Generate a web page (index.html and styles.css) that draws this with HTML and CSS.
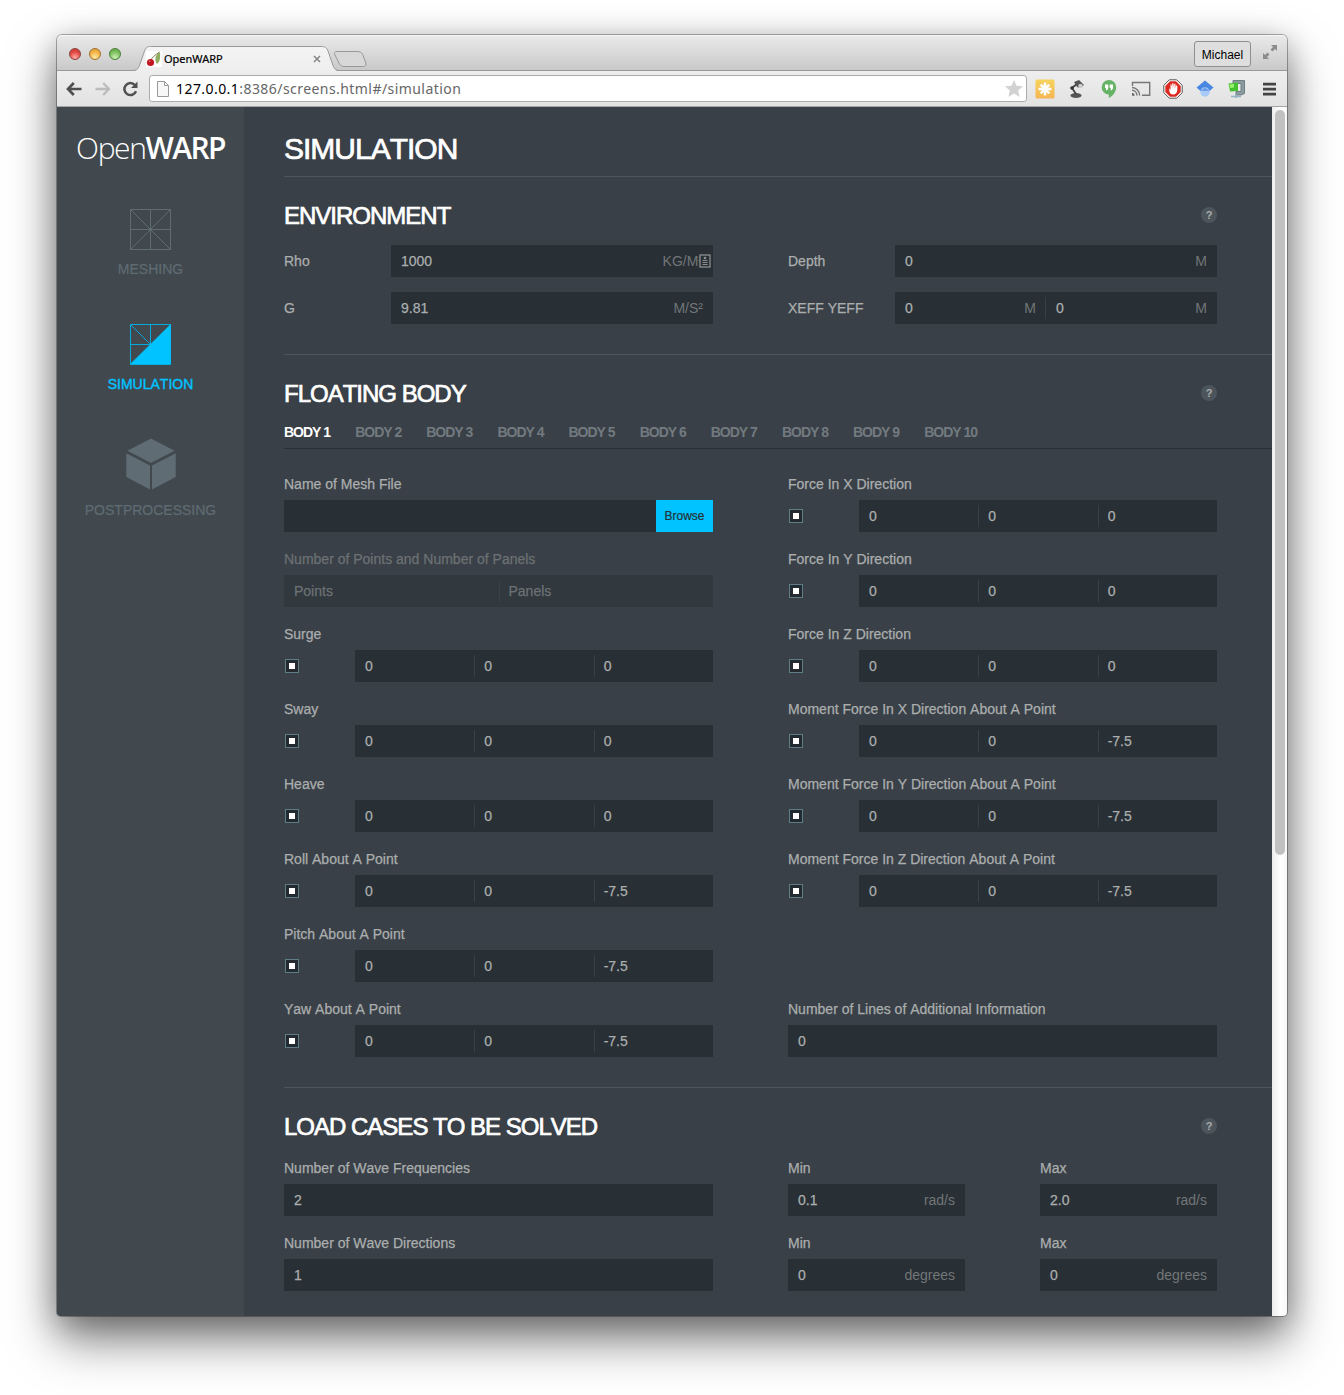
FILE: index.html
```html
<!DOCTYPE html>
<html lang="en">
<head>
<meta charset="utf-8">
<title>OpenWARP</title>
<link rel="stylesheet" href="styles.css">
</head>
<body>
<div class="window">
  <div class="tabstrip">
    <div class="lights"><i class="light red"></i><i class="light amber"></i><i class="light green"></i></div>
    <div class="browser-tab">
      <svg class="tab-shape" width="260" height="26" viewBox="0 0 260 26">
        <defs><linearGradient id="tabfill" x1="0" y1="0" x2="0" y2="1"><stop offset="0" stop-color="#f4f4f4"/><stop offset="1" stop-color="#eeeeee"/></linearGradient></defs>
        <path d="M0 25C3 25 5 23 6.500 19.500L11.500 5C13 1.500 14 .5 17.500 .5H188C192 .5 193.500 1.500 195 5L200 19.500C201.500 23 202.500 25 206 25V26H0Z" fill="url(#tabfill)"/>
        <path d="M-1 24.500C4 24.500 5 23 6.500 19.500L11.500 5C13 1.500 14 .5 17.500 .5H188C192 .5 193.500 1.500 195 5L200 19.500C201.500 23 202.500 24.500 207 24.500" fill="none" stroke="#999"/>
        <path d="M201.500 6.500Q202 5.500 204 5.500H225Q228 5.500 229.500 8L232.500 16Q234 20.500 230.500 20.500H211Q208 20.500 206.500 18L202 9Q201 7.500 201.500 6.500Z" fill="#d8d8d8" stroke="#999"/>
      </svg>
      <svg class="favicon" width="16" height="16" viewBox="0 0 16 16"><rect width="16" height="16" fill="#fff"/><path d="M13.500 1Q6 6 5 9" fill="none" stroke="#8a7a55"/><path d="M14 1C9 4 8 9 11 13C14 11 14.500 6 14 1Z" fill="#8fae62"/><circle cx="4.500" cy="11.500" r="3.600" fill="#c01822"/><circle cx="3.500" cy="10.300" r=".8" fill="#ee7d80"/></svg>
      <span class="tab-title">OpenWARP</span>
      <svg class="tab-close" width="8" height="8" viewBox="0 0 8 8"><path d="M1 1L7 7M7 1L1 7" stroke="#858585" stroke-width="1.500"/></svg>
    </div>
    <div class="strip-end">
      <span class="profile">Michael</span>
      <svg width="16" height="16" viewBox="0 0 16 16" fill="#8c8c8c"><path d="M9 1H15V7L13 5L10.500 7.500L8.500 5.500L11 3ZM1 9V15H7L5 13L7.500 10.500L5.500 8.500L3 11Z"/></svg>
    </div>
  </div>
  <div class="toolbar">
    <svg class="arrow" width="16" height="14" viewBox="0 0 16 14"><path d="M15.500 7H2.500M7.800 1L2 7L7.800 13" fill="none" stroke="#505050" stroke-width="2.700"/></svg>
    <svg class="arrow" width="16" height="14" viewBox="0 0 16 14"><path d="M.5 7H13.500M8.200 1L14 7L8.200 13" fill="none" stroke="#bcbcbc" stroke-width="2.300"/></svg>
    <svg class="reload" width="17" height="16" viewBox="0 0 17 16"><path d="M13 4.200A6 6 0 1 0 14 10.300" fill="none" stroke="#505050" stroke-width="2.500"/><path d="M15.500 .5V7H9Z" fill="#505050"/></svg>
    <div class="omnibox">
      <svg width="12" height="16" viewBox="0 0 12 16"><path d="M.5 .5H7.500L11.500 4.500V15.500H.5ZM7.500 .5V4.500H11.500" fill="#f7f7f7" stroke="#999"/></svg>
      <span class="url"><b>127.0.0.1</b>:8386/screens.html#/simulation</span>
      <svg class="star" width="18" height="17" viewBox="0 0 18 17"><path d="M9 0L11.500 5.700L18 6.300L13.200 10.600L14.600 17L9 13.600L3.400 17L4.800 10.600L0 6.300L6.500 5.700Z" fill="#d2d2d2"/></svg>
    </div>
    <div class="extensions">
      <svg width="20" height="20" viewBox="0 0 20 20"><defs><linearGradient id="sun" x1="0" y1="0" x2="0" y2="1"><stop offset="0" stop-color="#f6d35c"/><stop offset="1" stop-color="#f5b553"/></linearGradient></defs><rect x=".5" y=".5" width="19" height="19" rx="1.500" fill="url(#sun)"/><path d="M10 3.500V16.500M3.500 10H16.500M5.700 5.700L14.300 14.300M14.300 5.700L5.700 14.300" stroke="#fff" stroke-width="2.500"/></svg>
      <svg width="20" height="20" viewBox="0 0 20 20"><ellipse cx="9" cy="16.500" rx="5.500" ry="2.500" fill="#555"/><path d="M9 15L5 9L11 4" fill="none" stroke="#444" stroke-width="1.800"/><path d="M7 3L12 1L17 6L13 9L10 8Z" fill="#555"/><circle cx="13.500" cy="7" r="2.300" fill="#ccc"/><circle cx="5" cy="9" r="1.800" fill="#333"/></svg>
      <svg width="20" height="20" viewBox="0 0 20 20"><path d="M10 1A7.200 7.200 0 0 0 9.800 15.500V19C14 17 17.200 12.500 17.200 8.200A7.200 7.200 0 0 0 10 1Z" fill="#66b266"/><path d="M6 5.500H9.300V9Q9 11 7 11.500V9H6ZM10.700 5.500H14V9Q13.700 11 11.700 11.500V9H10.700Z" fill="#fff"/></svg>
      <svg width="20" height="20" viewBox="0 0 20 20" fill="none" stroke="#777" stroke-width="1.400"><path d="M1.500 7V3.500H18.700V16.300H11"/><path d="M1 8.500A8 8 0 0 1 8.700 16.500M1 11.300A5.300 5.300 0 0 1 6 16.500"/><path d="M1 14V16.700H3.600A2.600 2.600 0 0 0 1 14Z" fill="#666" stroke="none"/></svg>
      <svg width="20" height="20" viewBox="0 0 20 20"><path d="M6.300 .8H13.700L19.200 6.300V13.700L13.700 19.200H6.300L.8 13.700V6.300Z" fill="#fff" stroke="#555" stroke-width="1"/><path d="M7 2.300H13L17.700 7V13L13 17.700H7L2.300 13V7Z" fill="#dc2a22"/><path d="M6.300 9V12Q7 15.500 10.300 15.500Q13.500 15.500 14.300 11.500V6.500H13V9.500L12.300 4.800H11.200V9L10.300 4.200H9.200V9L8.500 5.500H7.500V11Z" fill="#fff"/></svg>
      <svg width="20" height="20" viewBox="0 0 20 20"><path d="M10 1.500L18.500 8.500L14 12.500H6L1.500 8.500Z" fill="#4a87e0"/><circle cx="10" cy="13" r="4.700" fill="#a9c9f7"/><path d="M5.500 12L10 8.500L14.500 12" fill="#6a9ee9"/></svg>
      <svg width="20" height="20" viewBox="0 0 20 20"><path d="M6 1.500H17.500V14.500L14 16H9V12.500H14V4.500H6Z" fill="#8b9ca1" stroke="#6d7d82"/><path d="M1.500 4.500L11 3.500V12L3 12.500Z" fill="#43c12e"/><path d="M2.500 5.500L7 5V8.500L3 9Z" fill="#9cf06f"/><path d="M4 17.500H14M9 15.500V19" stroke="#93b4c4" stroke-width="1.700"/></svg>
      <svg class="menu-icon" width="20" height="20" viewBox="0 0 20 20"><path d="M4 5.200H17M4 10.200H17M4 15.200H17" stroke="#444" stroke-width="2.700"/></svg>
    </div>
  </div>
  <div class="viewport">
    <aside class="sidebar">
      <div class="logo"><span class="logo-light">Open</span><span class="logo-bold">WARP</span></div>
      <nav>
        <a class="nav-item"><svg width="42" height="42" viewBox="0 0 42 42" fill="none" stroke="#5f6c73"><path d="M.5 1.500H40.500V41.500H.5ZM20.500 1.500V41.500M.5 21.500H40.500M.5 1.500L40.500 41.500M40.500 1.500L.5 41.500"/></svg><span>MESHING</span></a>
        <a class="nav-item active"><svg width="42" height="42" viewBox="0 0 42 42" fill="none" stroke="#02a9dc"><path d="M.5 1.500H40.500V41.500H.5ZM20.500 1.500V21.500M.5 21.500H20.500M.5 1.500L20.500 21.500"/><path d="M40.500 1.500V41H.5Z" fill="#00c3ff" stroke="#00c3ff" stroke-width=".6"/></svg><span>SIMULATION</span></a>
        <a class="nav-item cube"><svg width="50" height="52" viewBox="0 0 50 52" fill="#5f6c73"><path d="M25 .5L48.500 12.800L25 25L1.500 12.800ZM.3 15.300L24 27.500V51.500L.3 39ZM49.700 15.300L26 27.500V51.500L49.700 39Z"/></svg><span>POSTPROCESSING</span></a>
      </nav>
    </aside>
    <main class="main">
      <h1>SIMULATION</h1>
      <section>
        <header><h2>ENVIRONMENT</h2><span class="help">?</span></header>
        <div class="columns env">
          <div class="inline"><label>Rho</label><div class="box"><div class="cell wide">1000<em>KG/M³</em></div>
            <svg class="contact" width="12" height="14" viewBox="0 0 12 14"><rect x="1" y="1" width="10" height="12" fill="#282f35" stroke="#8b8e8e" stroke-width="1.300"/><circle cx="6" cy="4" r="1.300" fill="#8b8e8e"/><path d="M3.500 6.500H8.500M3.500 8.500H8.500M3.500 10.500H8.500" stroke="#8b8e8e" fill="none"/></svg></div></div>
          <div class="inline"><label>Depth</label><div class="box"><div class="cell">0<em>M</em></div></div></div>
          <div class="inline"><label>G</label><div class="box"><div class="cell">9.81<em>M/S²</em></div></div></div>
          <div class="inline"><label>XEFF YEFF</label><div class="box pair"><div class="cell">0<em>M</em></div><div class="cell">0<em>M</em></div></div></div>
        </div>
      </section>
      <section>
        <header><h2>FLOATING BODY</h2><span class="help">?</span></header>
        <div class="tabs"><a class="current">BODY 1</a><a>BODY 2</a><a>BODY 3</a><a>BODY 4</a><a>BODY 5</a><a>BODY 6</a><a>BODY 7</a><a>BODY 8</a><a>BODY 9</a><a>BODY 10</a></div>
        <div class="columns">
          <div class="field"><label>Name of Mesh File</label><div class="box"><div class="cell"></div><button>Browse</button></div></div>
          <div class="field"><label>Force In X Direction</label><div class="checked"><i class="check"></i><div class="box"><div class="cell">0</div><div class="cell">0</div><div class="cell">0</div></div></div></div>
          <div class="field disabled"><label>Number of Points and Number of Panels</label><div class="box"><div class="cell">Points</div><div class="cell">Panels</div></div></div>
          <div class="field"><label>Force In Y Direction</label><div class="checked"><i class="check"></i><div class="box"><div class="cell">0</div><div class="cell">0</div><div class="cell">0</div></div></div></div>
          <div class="field"><label>Surge</label><div class="checked"><i class="check"></i><div class="box"><div class="cell">0</div><div class="cell">0</div><div class="cell">0</div></div></div></div>
          <div class="field"><label>Force In Z Direction</label><div class="checked"><i class="check"></i><div class="box"><div class="cell">0</div><div class="cell">0</div><div class="cell">0</div></div></div></div>
          <div class="field"><label>Sway</label><div class="checked"><i class="check"></i><div class="box"><div class="cell">0</div><div class="cell">0</div><div class="cell">0</div></div></div></div>
          <div class="field"><label>Moment Force In X Direction About A Point</label><div class="checked"><i class="check"></i><div class="box"><div class="cell">0</div><div class="cell">0</div><div class="cell">-7.5</div></div></div></div>
          <div class="field"><label>Heave</label><div class="checked"><i class="check"></i><div class="box"><div class="cell">0</div><div class="cell">0</div><div class="cell">0</div></div></div></div>
          <div class="field"><label>Moment Force In Y Direction About A Point</label><div class="checked"><i class="check"></i><div class="box"><div class="cell">0</div><div class="cell">0</div><div class="cell">-7.5</div></div></div></div>
          <div class="field"><label>Roll About A Point</label><div class="checked"><i class="check"></i><div class="box"><div class="cell">0</div><div class="cell">0</div><div class="cell">-7.5</div></div></div></div>
          <div class="field"><label>Moment Force In Z Direction About A Point</label><div class="checked"><i class="check"></i><div class="box"><div class="cell">0</div><div class="cell">0</div><div class="cell">-7.5</div></div></div></div>
          <div class="field first-col"><label>Pitch About A Point</label><div class="checked"><i class="check"></i><div class="box"><div class="cell">0</div><div class="cell">0</div><div class="cell">-7.5</div></div></div></div>
          <div class="field first-col"><label>Yaw About A Point</label><div class="checked"><i class="check"></i><div class="box"><div class="cell">0</div><div class="cell">0</div><div class="cell">-7.5</div></div></div></div>
          <div class="field"><label>Number of Lines of Additional Information</label><div class="box"><div class="cell">0</div></div></div>
        </div>
      </section>
      <section class="load">
        <header><h2>LOAD CASES TO BE SOLVED</h2><span class="help">?</span></header>
        <div class="columns">
          <div class="field"><label>Number of Wave Frequencies</label><div class="box"><div class="cell">2</div></div></div>
          <div class="range">
            <div class="field"><label>Min</label><div class="box"><div class="cell">0.1<em>rad/s</em></div></div></div>
            <div class="field"><label>Max</label><div class="box"><div class="cell">2.0<em>rad/s</em></div></div></div>
          </div>
          <div class="field"><label>Number of Wave Directions</label><div class="box"><div class="cell">1</div></div></div>
          <div class="range">
            <div class="field"><label>Min</label><div class="box"><div class="cell">0<em>degrees</em></div></div></div>
            <div class="field"><label>Max</label><div class="box"><div class="cell">0<em>degrees</em></div></div></div>
          </div>
        </div>
      </section>
    </main>
    <div class="scrollbar"><div class="thumb"></div></div>
  </div>
</div>
</body>
</html>
```
FILE: styles.css
```css
* { box-sizing: border-box; }
body { margin: 0; padding: 35px 57px 79px; height: 1395px; overflow: hidden; background: #fff; font: 14px/20px "Liberation Sans", Arial, sans-serif; font-kerning: none; color: #abaeae; }
h1, h2 { margin: 0; font-weight: 400; color: #fff; letter-spacing: -1px; -webkit-text-stroke: .7px #fff; }
svg { display: block; flex: none; }
.window { width: 1230px; height: 1281px; border-radius: 5px 5px 4px 4px; overflow: hidden; display: flex; flex-direction: column; box-shadow: 0 0 0 1px rgba(0,0,0,.3), 0 24px 48px rgba(0,0,0,.5), 0 6px 30px rgba(0,0,0,.25); }

.tabstrip { height: 36px; flex: none; display: flex; background: linear-gradient(#e9e9e9, #c9c9c9); border-top: 1px solid #f6f6f6; border-bottom: 1px solid #999; }
.lights { display: flex; gap: 8px; padding: 12px 0 0 12px; width: 76px; }
.light { width: 12px; height: 12px; border-radius: 50%; border: 1px solid #8a4440; }
.red { background: radial-gradient(circle at 50% 85%, #ffaaa4, #e0443e 60%, #c43a36); }
.amber { border-color: #a06e2c; background: radial-gradient(circle at 50% 85%, #ffe9a0, #f3b345 60%, #d9952d); }
.green { border-color: #4c7f38; background: radial-gradient(circle at 50% 85%, #ccf2b4, #7abf5c 60%, #5aa040); }
.browser-tab { position: relative; width: 260px; height: 26px; margin-top: 10px; display: flex; align-items: center; padding-left: 13px; }
.tab-shape { position: absolute; left: 0; top: 0; }
.favicon, .tab-title, .tab-close { position: relative; }
.tab-title { margin-left: 2px; width: 151px; font: 11px/16px "Noto Sans", sans-serif; color: #000; -webkit-text-stroke: .2px #000; }
.tab-close { margin-left: -2px; }
.strip-end { margin-left: auto; display: flex; gap: 11px; padding: 5px 9px 0 0; }
.strip-end svg { margin-top: 3px; }
.profile { width: 57px; height: 26px; border: 1px solid #8f8f8f; border-radius: 3px; background: #dedede; text-align: center; font-size: 12px; line-height: 26px; color: #000; }
.toolbar { height: 36px; flex: none; display: flex; align-items: center; background: linear-gradient(#eeeeee, #e2e2e2); padding-left: 9px; border-bottom: 1px solid #a5a5a5; }
.arrow { margin-right: 13px; }
.arrow + .arrow { margin-right: 11px; }
.omnibox { width: 878px; height: 27px; margin-left: 10px; background: #fff; border: 1px solid #ababab; border-radius: 3px; display: flex; align-items: center; padding: 0 3px 0 7px; }
.url { margin-left: 7px; font: 14px/20px "Noto Sans", sans-serif; letter-spacing: .44px; color: #666; }
.url b { font-weight: 400; color: #000; }
.star { margin-left: auto; }
.extensions { display: flex; gap: 12px; margin-left: 8px; }

.viewport { flex: 1; min-height: 0; display: flex; background: #394047; }
.sidebar { width: 187px; background: #41484e; flex: none; }
.logo { display: flex; justify-content: center; padding-top: 20px; height: 101px; font: 30px/41px "Open Sans", sans-serif; color: #fff; }
.logo-light { font-weight: 300; letter-spacing: -1.4px; }
.logo-bold { font-weight: 600; letter-spacing: -1.6px; }
.nav-item { display: flex; flex-direction: column; align-items: center; height: 115px; gap: 9px; color: #5f6c73; -webkit-text-stroke: .2px; }
.nav-item.active { color: #00c3ff; -webkit-text-stroke: .4px; }
.cube svg { margin-bottom: 1px; }
.main { flex: 1; min-width: 0; padding-left: 40px; }
h1 { height: 70px; border-bottom: 1px solid #4d555c; font-size: 30px; line-height: 40px; padding-top: 22px; }
section { padding: 23px 0 30px; border-bottom: 1px solid #4d555c; }
section:last-child { border: 0; }
section header { display: flex; justify-content: space-between; align-items: center; height: 30px; padding-right: 55px; }
h2 { font-size: 24px; line-height: 28px; padding-top: 2px; }
.help { width: 16px; height: 16px; border-radius: 50%; background: #4d555c; color: #abaeae; text-align: center; font: bold 11px/16px "Liberation Sans", sans-serif; }
.columns { display: grid; grid-template-columns: 429px 429px; column-gap: 75px; row-gap: 17px; }
.env { margin-top: 15px; row-gap: 15px; }
.load .columns { margin-top: 17px; }
.inline { display: grid; grid-template-columns: 107px 1fr; align-items: center; }
label, .cell { -webkit-text-stroke: .25px; }
.field label { display: block; margin-bottom: 6px; }
.first-col { grid-column: 1; }
.box { position: relative; display: flex; flex: 1; height: 32px; background: #282f35; padding: 5px 0; }
.cell { flex: 1; display: flex; justify-content: space-between; padding: 1px 10px 0; line-height: 20px; }
.cell + .cell { border-left: 1px solid #394047; padding-left: 9px; }
.cell em { font-style: normal; color: #727677; -webkit-text-stroke: 0; }
.pair .cell:first-child { flex: 0 0 150px; padding-right: 9px; }
.pair .cell + .cell { padding-left: 10px; }
.contact { position: absolute; right: 2px; top: 9px; }
.tabs { display: flex; gap: 25px; margin: 14px 0 25px; height: 27px; border-bottom: 1px solid #282f35; font-weight: 700; letter-spacing: -1px; color: #727a80; }
.tabs .current { color: #fff; }
button { width: 57px; height: 32px; margin-top: -5px; border: 0; padding: 0; background: #00c3ff; font: 12px "Liberation Sans", sans-serif; color: #282f35; -webkit-text-stroke: .2px; }
.disabled label, .disabled .cell { color: #6c7174; }
.disabled .box { background: #31383e; }
.checked { display: flex; align-items: center; }
.check { width: 14px; height: 14px; margin: 0 56px 0 1px; border: 1px solid #5f7d88; background: linear-gradient(#fff, #fff) center / 6px 6px no-repeat #242b30; }
.range { display: grid; grid-template-columns: 177px 177px; gap: 75px; }
.scrollbar { width: 15px; padding: 3px 2px 0 3px; background: linear-gradient(90deg, #ececec, #fff 60%, #f8f8f8); }
.thumb { height: 745px; border-radius: 5px; background: #c1c1c1; }
```
